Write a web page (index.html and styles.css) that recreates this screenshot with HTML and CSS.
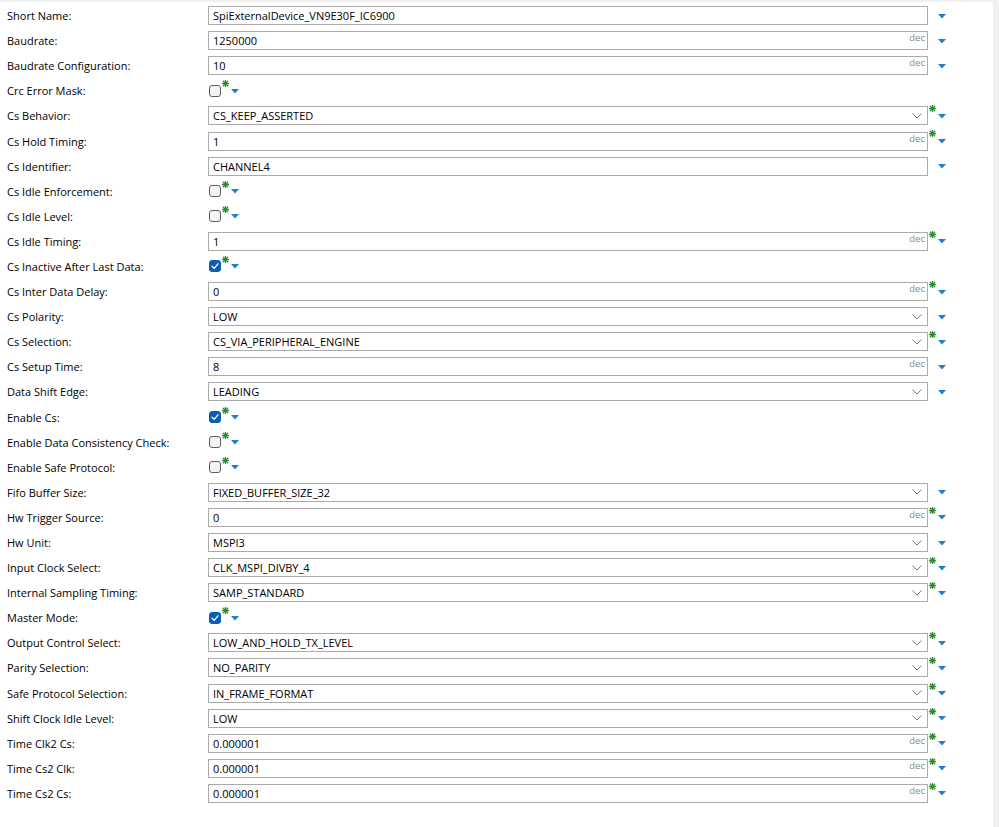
FILE: index.html
```html
<!DOCTYPE html>
<html>
<head>
<meta charset="utf-8">
<title>SpiExternalDevice</title>
<link rel="stylesheet" href="styles.css">
</head>
<body>
<svg class="defs" width="0" height="0" aria-hidden="true">
  <symbol id="tri" viewBox="0 0 8 5"><polygon points="0,0 8,0 4,4.5" fill="#1b7fd6"/></symbol>
  <symbol id="ast" viewBox="0 0 7 7"><g stroke="#2e8b2e" stroke-width="1.3" stroke-linecap="round"><line x1="3.5" y1="0.4" x2="3.5" y2="6.6"/><line x1="0.4" y1="3.5" x2="6.6" y2="3.5"/><line x1="1.3" y1="1.3" x2="5.7" y2="5.7"/><line x1="5.7" y1="1.3" x2="1.3" y2="5.7"/></g></symbol>
  <symbol id="chev" viewBox="0 0 10 6"><polyline points="0.5,0.5 5,5 9.5,0.5" fill="none" stroke="#7a7a7a" stroke-width="1"/></symbol>
  <symbol id="check" viewBox="0 0 10 10"><polyline points="2,5.2 4.2,7.3 8,2.8" fill="none" stroke="#fff" stroke-width="1.3" stroke-linecap="round" stroke-linejoin="round"/></symbol>
</svg>
<div class="window">
<div class="panel">

<div class="row"><span class="lbl">Short Name:</span><div class="field"><span class="val">SpiExternalDevice_VN9E30F_IC6900</span></div><span class="marks"><span class="ast"></span><svg class="tri"><use href="#tri"/></svg></span></div>

<div class="row"><span class="lbl">Baudrate:</span><div class="field"><span class="val">1250000</span><span class="unit">dec</span></div><span class="marks"><span class="ast"></span><svg class="tri"><use href="#tri"/></svg></span></div>

<div class="row"><span class="lbl">Baudrate Configuration:</span><div class="field"><span class="val">10</span><span class="unit">dec</span></div><span class="marks"><span class="ast"></span><svg class="tri"><use href="#tri"/></svg></span></div>

<div class="row"><span class="lbl">Crc Error Mask:</span><span class="cb"></span><span class="marks"><svg class="ast"><use href="#ast"/></svg><svg class="tri"><use href="#tri"/></svg></span></div>

<div class="row"><span class="lbl">Cs Behavior:</span><div class="field"><span class="val">CS_KEEP_ASSERTED</span><svg class="chev"><use href="#chev"/></svg></div><span class="marks"><svg class="ast"><use href="#ast"/></svg><svg class="tri"><use href="#tri"/></svg></span></div>

<div class="row"><span class="lbl">Cs Hold Timing:</span><div class="field"><span class="val">1</span><span class="unit">dec</span></div><span class="marks"><svg class="ast"><use href="#ast"/></svg><svg class="tri"><use href="#tri"/></svg></span></div>

<div class="row"><span class="lbl">Cs Identifier:</span><div class="field"><span class="val">CHANNEL4</span></div><span class="marks"><span class="ast"></span><svg class="tri"><use href="#tri"/></svg></span></div>

<div class="row"><span class="lbl">Cs Idle Enforcement:</span><span class="cb"></span><span class="marks"><svg class="ast"><use href="#ast"/></svg><svg class="tri"><use href="#tri"/></svg></span></div>

<div class="row"><span class="lbl">Cs Idle Level:</span><span class="cb"></span><span class="marks"><svg class="ast"><use href="#ast"/></svg><svg class="tri"><use href="#tri"/></svg></span></div>

<div class="row"><span class="lbl">Cs Idle Timing:</span><div class="field"><span class="val">1</span><span class="unit">dec</span></div><span class="marks"><svg class="ast"><use href="#ast"/></svg><svg class="tri"><use href="#tri"/></svg></span></div>

<div class="row"><span class="lbl">Cs Inactive After Last Data:</span><span class="cb on"><svg class="chk"><use href="#check"/></svg></span><span class="marks"><svg class="ast"><use href="#ast"/></svg><svg class="tri"><use href="#tri"/></svg></span></div>

<div class="row"><span class="lbl">Cs Inter Data Delay:</span><div class="field"><span class="val">0</span><span class="unit">dec</span></div><span class="marks"><svg class="ast"><use href="#ast"/></svg><svg class="tri"><use href="#tri"/></svg></span></div>

<div class="row"><span class="lbl">Cs Polarity:</span><div class="field"><span class="val">LOW</span><svg class="chev"><use href="#chev"/></svg></div><span class="marks"><span class="ast"></span><svg class="tri"><use href="#tri"/></svg></span></div>

<div class="row"><span class="lbl">Cs Selection:</span><div class="field"><span class="val">CS_VIA_PERIPHERAL_ENGINE</span><svg class="chev"><use href="#chev"/></svg></div><span class="marks"><svg class="ast"><use href="#ast"/></svg><svg class="tri"><use href="#tri"/></svg></span></div>

<div class="row"><span class="lbl">Cs Setup Time:</span><div class="field"><span class="val">8</span><span class="unit">dec</span></div><span class="marks"><span class="ast"></span><svg class="tri"><use href="#tri"/></svg></span></div>

<div class="row"><span class="lbl">Data Shift Edge:</span><div class="field"><span class="val">LEADING</span><svg class="chev"><use href="#chev"/></svg></div><span class="marks"><span class="ast"></span><svg class="tri"><use href="#tri"/></svg></span></div>

<div class="row"><span class="lbl">Enable Cs:</span><span class="cb on"><svg class="chk"><use href="#check"/></svg></span><span class="marks"><svg class="ast"><use href="#ast"/></svg><svg class="tri"><use href="#tri"/></svg></span></div>

<div class="row"><span class="lbl">Enable Data Consistency Check:</span><span class="cb"></span><span class="marks"><svg class="ast"><use href="#ast"/></svg><svg class="tri"><use href="#tri"/></svg></span></div>

<div class="row"><span class="lbl">Enable Safe Protocol:</span><span class="cb"></span><span class="marks"><svg class="ast"><use href="#ast"/></svg><svg class="tri"><use href="#tri"/></svg></span></div>

<div class="row"><span class="lbl">Fifo Buffer Size:</span><div class="field"><span class="val">FIXED_BUFFER_SIZE_32</span><svg class="chev"><use href="#chev"/></svg></div><span class="marks"><span class="ast"></span><svg class="tri"><use href="#tri"/></svg></span></div>

<div class="row"><span class="lbl">Hw Trigger Source:</span><div class="field"><span class="val">0</span><span class="unit">dec</span></div><span class="marks"><svg class="ast"><use href="#ast"/></svg><svg class="tri"><use href="#tri"/></svg></span></div>

<div class="row"><span class="lbl">Hw Unit:</span><div class="field"><span class="val">MSPI3</span><svg class="chev"><use href="#chev"/></svg></div><span class="marks"><span class="ast"></span><svg class="tri"><use href="#tri"/></svg></span></div>

<div class="row"><span class="lbl">Input Clock Select:</span><div class="field"><span class="val">CLK_MSPI_DIVBY_4</span><svg class="chev"><use href="#chev"/></svg></div><span class="marks"><svg class="ast"><use href="#ast"/></svg><svg class="tri"><use href="#tri"/></svg></span></div>

<div class="row"><span class="lbl">Internal Sampling Timing:</span><div class="field"><span class="val">SAMP_STANDARD</span><svg class="chev"><use href="#chev"/></svg></div><span class="marks"><svg class="ast"><use href="#ast"/></svg><svg class="tri"><use href="#tri"/></svg></span></div>

<div class="row"><span class="lbl">Master Mode:</span><span class="cb on"><svg class="chk"><use href="#check"/></svg></span><span class="marks"><svg class="ast"><use href="#ast"/></svg><svg class="tri"><use href="#tri"/></svg></span></div>

<div class="row"><span class="lbl">Output Control Select:</span><div class="field"><span class="val">LOW_AND_HOLD_TX_LEVEL</span><svg class="chev"><use href="#chev"/></svg></div><span class="marks"><svg class="ast"><use href="#ast"/></svg><svg class="tri"><use href="#tri"/></svg></span></div>

<div class="row"><span class="lbl">Parity Selection:</span><div class="field"><span class="val">NO_PARITY</span><svg class="chev"><use href="#chev"/></svg></div><span class="marks"><svg class="ast"><use href="#ast"/></svg><svg class="tri"><use href="#tri"/></svg></span></div>

<div class="row"><span class="lbl">Safe Protocol Selection:</span><div class="field"><span class="val">IN_FRAME_FORMAT</span><svg class="chev"><use href="#chev"/></svg></div><span class="marks"><svg class="ast"><use href="#ast"/></svg><svg class="tri"><use href="#tri"/></svg></span></div>

<div class="row"><span class="lbl">Shift Clock Idle Level:</span><div class="field"><span class="val">LOW</span><svg class="chev"><use href="#chev"/></svg></div><span class="marks"><svg class="ast"><use href="#ast"/></svg><svg class="tri"><use href="#tri"/></svg></span></div>

<div class="row"><span class="lbl">Time Clk2 Cs:</span><div class="field"><span class="val">0.000001</span><span class="unit">dec</span></div><span class="marks"><svg class="ast"><use href="#ast"/></svg><svg class="tri"><use href="#tri"/></svg></span></div>

<div class="row"><span class="lbl">Time Cs2 Clk:</span><div class="field"><span class="val">0.000001</span><span class="unit">dec</span></div><span class="marks"><svg class="ast"><use href="#ast"/></svg><svg class="tri"><use href="#tri"/></svg></span></div>

<div class="row"><span class="lbl">Time Cs2 Cs:</span><div class="field"><span class="val">0.000001</span><span class="unit">dec</span></div><span class="marks"><svg class="ast"><use href="#ast"/></svg><svg class="tri"><use href="#tri"/></svg></span></div>

</div>
</div>
</body>
</html>
```
FILE: styles.css
```css
html, body {
  margin: 0;
  padding: 0;
  background: #f0f0f0;
}
body {
  font-family: "Open Sans", "Noto Sans", "Liberation Sans", sans-serif;
  font-size: 11px;
  color: #000;
  width: 999px;
  height: 827px;
  overflow: hidden;
}
.defs {
  position: absolute;
  width: 0;
  height: 0;
}
.window {
  margin-top: 2px;
  width: 993px;
  height: 825px;
  background: #ffffff;
}
.panel {
  padding: 1px 0 0 7px;
  display: flex;
  flex-direction: column;
}
.row {
  height: 25.1px;
  display: flex;
  align-items: center;
}
.lbl {
  flex: 0 0 201px;
  white-space: nowrap;
}
.field {
  flex: 0 0 720px;
  box-sizing: border-box;
  height: 19px;
  border: 1px solid #ababab;
  background: #fff;
  display: flex;
  justify-content: space-between;
  align-items: center;
  padding: 0 4px 0 4px;
}
.val {
  color: #000;
  white-space: nowrap;
}
.unit {
  align-self: flex-start;
  font-size: 9.5px;
  line-height: 12px;
  color: #8a8a8a;
  margin-right: -2px;
}
.chev {
  width: 10px;
  height: 6px;
  margin-right: 1px;
}
.cb {
  flex: 0 0 auto;
  box-sizing: border-box;
  width: 12px;
  height: 12px;
  margin-left: 1px;
  border: 1px solid #5f5f5f;
  border-radius: 3px;
  background: #f4f4f4;
  display: flex;
  align-items: center;
  justify-content: center;
}
.cb.on {
  background: #0a5fb4;
  border-color: #0a5fb4;
}
.chk {
  width: 10px;
  height: 10px;
}
.marks {
  align-self: stretch;
  display: flex;
  align-items: center;
}
.ast {
  align-self: flex-start;
  flex: 0 0 7px;
  width: 7px;
  height: 7px;
  margin-top: 2px;
  margin-left: 1px;
}
.tri {
  width: 8px;
  height: 5px;
  margin-left: 2px;
  margin-top: 1px;
}
```
